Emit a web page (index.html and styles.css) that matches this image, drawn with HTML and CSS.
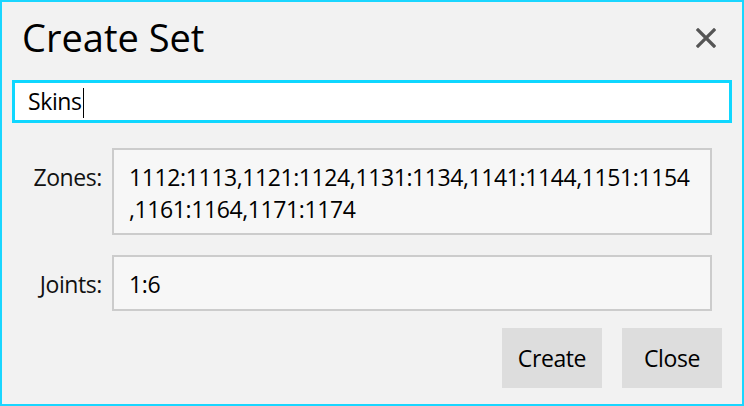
FILE: index.html
```html
<!DOCTYPE html>
<html lang="en">
<head>
<meta charset="utf-8">
<title>Create Set</title>
<link rel="stylesheet" href="styles.css">
</head>
<body>
<div class="window">
  <div class="header">
    <h1 class="title">Create Set</h1>
    <button class="close-x" aria-label="Close">
      <svg width="20" height="20" viewBox="0 0 20 20"><path d="M2 2 L18 18 M18 2 L2 18" stroke="#555" stroke-width="3.2" stroke-linecap="square" fill="none"/></svg>
    </button>
  </div>
  <div class="name-box"><span class="name-text">Skins</span><span class="caret"></span></div>
  <div class="form">
    <div class="label">Zones:</div>
    <div class="field field-tall"><span class="line">1112:1113,1121:1124,1131:1134,1141:1144,1151:1154</span><span class="line">,1161:1164,1171:1174</span></div>
    <div class="label">Joints:</div>
    <div class="field field-short"><span class="line">1:6</span></div>
  </div>
  <div class="actions">
    <button class="btn">Create</button>
    <button class="btn">Close</button>
  </div>
</div>
</body>
</html>
```

FILE: styles.css
```css
html, body {
  margin: 0;
  padding: 0;
  background: #f2f2f2;
}

.window {
  width: 744px;
  height: 406px;
  box-sizing: border-box;
  border: 2px solid #1ad6ff;
  background: #f2f2f2;
  padding: 0 10px;
  font-family: "Open Sans", "Noto Sans", sans-serif;
  color: #000;
}

.header {
  display: flex;
  justify-content: space-between;
  align-items: flex-start;
}

.title {
  margin: 9px 0 0 10px;
  font-size: 38px;
  font-weight: 400;
  line-height: 52px;
  letter-spacing: 0;
}

.close-x {
  margin: 26px 16px 0 0;
  padding: 0;
  border: none;
  background: none;
  width: 20px;
  height: 20px;
  display: block;
}

.close-x svg {
  display: block;
}

.name-box {
  margin-top: 17px;
  height: 43px;
  box-sizing: border-box;
  border: 3px solid #0fd7ff;
  background: #fff;
  padding: 2px 13px 0;
  font-size: 23px;
  line-height: 32px;
  letter-spacing: -0.4px;
  display: flex;
  align-items: flex-start;
}

.caret {
  display: block;
  width: 1px;
  height: 30px;
  background: #000;
  margin: 3px 0 0 1px;
}

.form {
  margin-top: 25px;
  display: grid;
  grid-template-columns: 90px 600px;
  column-gap: 10px;
  row-gap: 20px;
  font-size: 23px;
  line-height: 32px;
  letter-spacing: -0.4px;
}

.label {
  text-align: right;
  padding-top: 13px;
  color: #111;
}

.field {
  box-sizing: border-box;
  border: 2px solid #cccccc;
  background: #f7f7f7;
  padding: 11px 15px 0;
}

.field-tall {
  height: 87px;
}

.field-short {
  height: 56px;
}

.line {
  display: block;
  white-space: nowrap;
}

.actions {
  margin-top: 17px;
  display: flex;
  justify-content: flex-end;
  gap: 20px;
  padding-right: 10px;
}

.btn {
  width: 100px;
  height: 60px;
  border: none;
  background: #dddddd;
  font-family: "Open Sans", "Noto Sans", sans-serif;
  font-size: 23px;
  letter-spacing: -0.4px;
  color: #000;
  padding: 0;
}
```
